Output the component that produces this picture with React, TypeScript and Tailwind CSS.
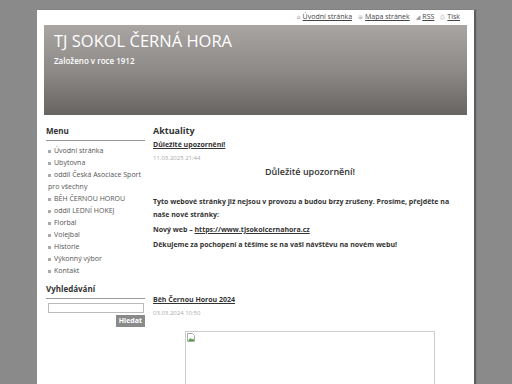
const menu = [
  'Úvodní stránka',
  'Ubytovna',
  'oddíl Česká Asociace Sport pro všechny',
  'BĚH ČERNOU HOROU',
  'oddíl LEDNÍ HOKEJ',
  'Florbal',
  'Volejbal',
  'Historie',
  'Výkonný výbor',
  'Kontakt',
];

const TopLink = ({ icon, label }: { icon: string; label: string }) => (
  <span className="flex items-center gap-[2px]">
    <span className="text-[6px] text-[#999]">{icon}</span>
    <a className="underline text-[#444]">{label}</a>
  </span>
);

export default function App() {
  return (
    <div
      className="w-[512px] h-[384px] overflow-hidden bg-[#8a8a8a] pt-[10px]"
      style={{ fontFamily: '"Open Sans", "DejaVu Sans", sans-serif' }}
    >
      <div className="ml-[37px] w-[437px] h-[400px] bg-white px-[7px] shadow-[2px_0_1px_#5e5e5e]">
        {/* top links */}
        <div className="h-[15px] flex items-center justify-end gap-[6px] pr-[7px] text-[7px]">
          <TopLink icon="⌂" label="Úvodní stránka" />
          <TopLink icon="≡" label="Mapa stránek" />
          <TopLink icon="◢" label="RSS" />
          <TopLink icon="⎙" label="Tisk" />
        </div>

        {/* banner */}
        <div className="h-[90px] bg-gradient-to-b from-[#a9a5a3] via-[#8e8a88] to-[#686462] pl-[10px] pt-[5px] text-white">
          <div className="text-[16.5px] leading-[22px]">TJ SOKOL ČERNÁ HORA</div>
          <div className="text-[8px] font-semibold mt-[3px]">Založeno v roce 1912</div>
        </div>

        <div className="flex">
          {/* sidebar */}
          <div className="w-[99px] ml-[2px] pt-[10px]">
            <div className="text-[8px] font-bold text-[#333] pb-[3px] border-b border-[#999]">Menu</div>
            <ul className="mt-[4px] pl-[2px] text-[7px] leading-[12px] text-[#555]">
              {menu.map((m) => (
                <li key={m}>
                  <span className="inline-block w-[3px] h-[3px] bg-[#aaa] mr-[3px] align-middle" />
                  {m}
                </li>
              ))}
            </ul>
            <div className="mt-[6px] text-[8px] font-bold text-[#333] pb-[3px] border-b border-[#999]">Vyhledávání</div>
            <div className="mt-[4px] pl-[2px]">
              <div className="h-[10px] w-[96px] border border-[#bbb]" />
              <div className="flex justify-end mt-[2px]">
                <button className="bg-[#8a8a8a] text-white text-[7px] font-bold px-[3px] h-[12px] leading-[12px]">Hledat</button>
              </div>
            </div>
          </div>

          {/* main */}
          <div className="ml-[8px] w-[314px] pt-[10px] text-[#333]">
            <div className="text-[9px] font-bold leading-[12px]">Aktuality</div>
            <a className="block mt-[2px] text-[7px] font-bold underline leading-[12px]">Důležité upozornění!</a>
            <div className="mt-[1px] text-[6px] text-[#aaa] leading-[12px]">11.03.2025 21:44</div>
            <div className="mt-[1px] text-center text-[9px] font-semibold leading-[14px]">Důležité upozornění!</div>
            <div className="mt-[16px] text-[7px] font-bold leading-[13px] pr-[8px]">
              <p>Tyto webové stránky již nejsou v provozu a budou brzy zrušeny. Prosíme, přejděte na naše nové stránky:</p>
              <p className="mt-[2px]">Nový web – <a className="underline">https://www.tjsokolcernahora.cz</a></p>
              <p className="mt-[2px]">Děkujeme za pochopení a těšíme se na vaši návštěvu na novém webu!</p>
            </div>
            <a className="block mt-[43px] text-[7px] font-bold underline leading-[12px]">Běh Černou Horou 2024</a>
            <div className="mt-[1px] text-[6px] text-[#aaa] leading-[12px]">03.03.2024 10:50</div>
            <div className="mt-[12px] ml-[32px] w-[250px] h-[60px] border border-[#ccc] relative">
              <svg className="absolute left-[1px] top-[1px]" width="8" height="9" viewBox="0 0 8 9">
                <path d="M0.5 0.5h5l2 2v6h-7z" fill="#fff" stroke="#aaa" />
                <path d="M1.5 7l2-2 1.5 1.5 1-1 1 1.5v1h-5.5z" fill="#5a9e4a" />
              </svg>
            </div>
          </div>
        </div>
      </div>
    </div>
  );
}
